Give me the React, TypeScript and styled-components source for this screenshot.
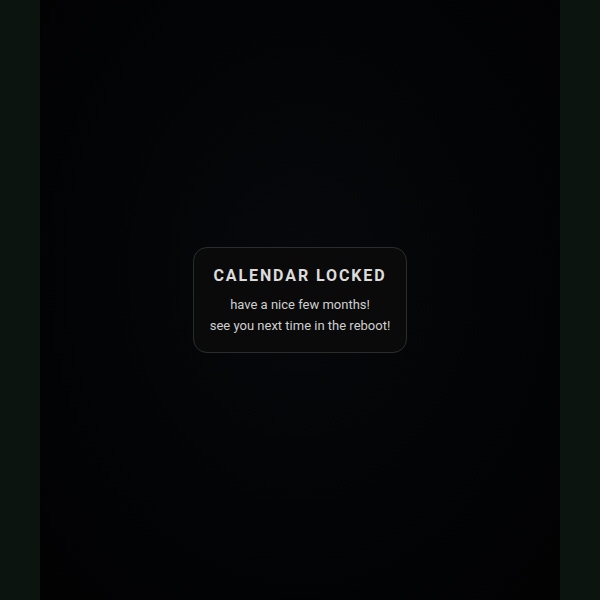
import React from "react";
import styled, { createGlobalStyle } from "styled-components";

const Global = createGlobalStyle`
  html, body { margin: 0; padding: 0; background: #0c1410; }
  #root { height: 600px; }
`;

const Page = styled.div`
  height: 600px;
  display: grid;
  grid-template-columns: 40px 520px 40px;
  background: #0c1410;
  font-family: Roboto, "Liberation Sans", sans-serif;
`;

const Column = styled.div`
  background: radial-gradient(ellipse at 50% 45%, #06080b 0%, #030406 55%, #020203 100%);
  display: flex;
  align-items: center;
  justify-content: center;
`;

const Card = styled.div`
  width: 214px;
  box-sizing: border-box;
  height: 106px;
  border: 1px solid #2a2d2e;
  border-radius: 14px;
  background: #0a0a0b;
  display: flex;
  flex-direction: column;
  align-items: center;
  padding-top: 18px;
  margin-bottom: 1px;
`;

const Title = styled.div`
  font-size: 16px;
  font-weight: 700;
  letter-spacing: 1.9px;
  color: #dcdcdc;
  line-height: 20px;
  margin-bottom: 8px;
`;

const Line = styled.div`
  font-size: 13px;
  color: #cfcfcf;
  line-height: 21px;
`;

export default function App() {
  return (
    <>
      <Global />
      <Page>
        <div />
        <Column>
          <Card>
            <Title>CALENDAR LOCKED</Title>
            <Line>have a nice few months!</Line>
            <Line>see you next time in the reboot!</Line>
          </Card>
        </Column>
        <div />
      </Page>
    </>
  );
}
